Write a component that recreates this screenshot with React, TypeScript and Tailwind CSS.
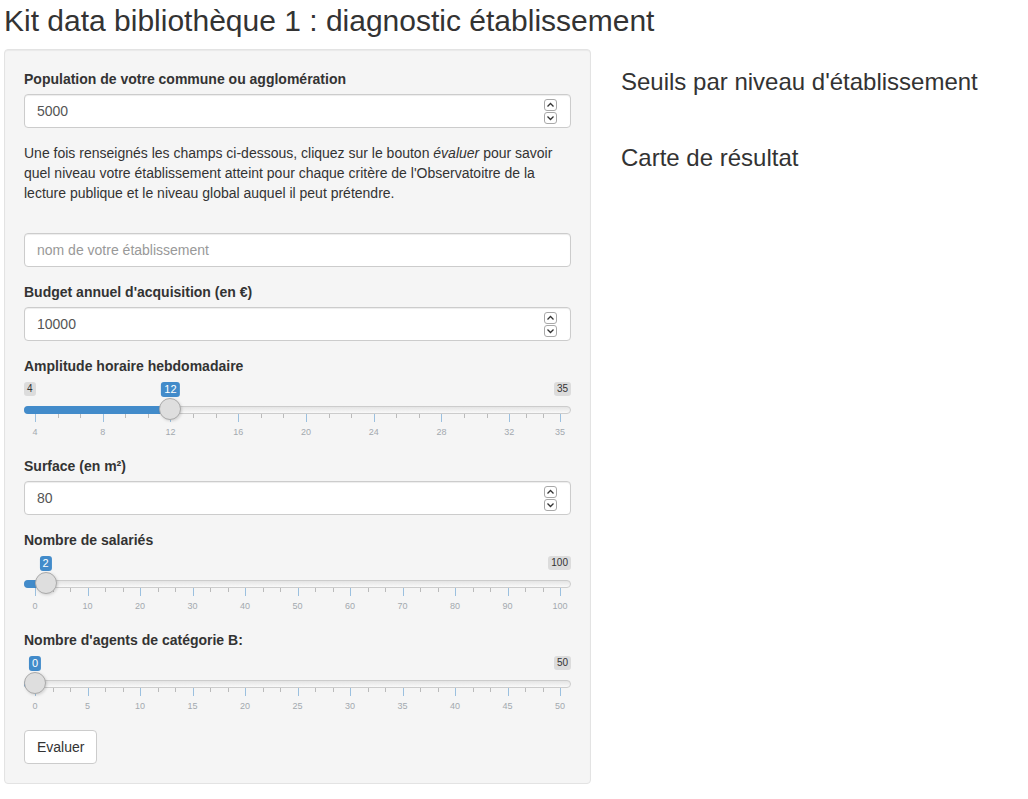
import React from 'react';

const TRACK = 525;
const EDGE = 11;

function Spinner() {
  return (
    <div className="flex flex-col gap-px">
      <span className="flex h-[12px] w-[13px] items-center justify-center rounded-[3px] border border-[#a9a9a9] bg-white">
        <svg width="9" height="6" viewBox="0 0 9 6">
          <path d="M1.5 4.5 L4.5 1.5 L7.5 4.5" fill="none" stroke="#333" strokeWidth="1.3" />
        </svg>
      </span>
      <span className="flex h-[12px] w-[13px] items-center justify-center rounded-[3px] border border-[#a9a9a9] bg-white">
        <svg width="9" height="6" viewBox="0 0 9 6">
          <path d="M1.5 1.5 L4.5 4.5 L7.5 1.5" fill="none" stroke="#333" strokeWidth="1.3" />
        </svg>
      </span>
    </div>
  );
}

function NumberField({ value }: { value: string }) {
  return (
    <div className="flex h-[34px] items-center justify-between rounded-[4px] border border-[#ccc] bg-white pl-3 pr-[13px] text-[14px] text-[#555] shadow-[inset_0_1px_1px_rgba(0,0,0,0.075)]">
      <span>{value}</span>
      <Spinner />
    </div>
  );
}

function Label({ children }: { children: React.ReactNode }) {
  return <label className="mb-[5px] block text-[14px] font-bold leading-[20px]">{children}</label>;
}

interface SliderProps {
  min: number;
  max: number;
  value: number;
  majors: number[];
  showMin?: boolean;
}

function Slider({ min, max, value, majors, showMin }: SliderProps) {
  const pos = (v: number) => EDGE + ((v - min) / (max - min)) * TRACK;
  const p = pos(value);

  // two small ticks between each pair of big ones
  const smalls: number[] = [];
  for (let i = 0; i < majors.length - 1; i++) {
    const a = pos(majors[i]);
    const b = pos(majors[i + 1]);
    smalls.push(a + (b - a) / 3, a + ((b - a) * 2) / 3);
  }

  return (
    <div className="relative h-[60px]">
      {showMin && (
        <span className="absolute left-0 top-px rounded-[3px] bg-black/10 px-[3px] py-px text-[10px] leading-[12px] text-[#333]">
          {min}
        </span>
      )}
      <span className="absolute right-0 top-px rounded-[3px] bg-black/10 px-[3px] py-px text-[10px] leading-[12px] text-[#333]">
        {max}
      </span>
      <span
        className="absolute top-px -translate-x-1/2 rounded-[3px] bg-[#428bca] px-[3px] py-px text-[11px] leading-[13px] text-white"
        style={{ left: p }}
      >
        {value}
      </span>

      <div className="absolute left-0 right-0 top-[25px] h-[8px] rounded-full border border-[#ccc] bg-linear-to-b from-[#e4e4e4] to-[#f9f9f9]" />
      <div className="absolute left-0 top-[25px] h-[8px] rounded-l-full bg-[#428bca]" style={{ width: p }} />

      {smalls.map((x, i) => (
        <span key={'s' + i} className="absolute top-[33px] h-[4px] w-px bg-[#bbb]" style={{ left: x }} />
      ))}
      {majors.map((m) => (
        <React.Fragment key={m}>
          <span className="absolute top-[33px] h-[8px] w-px bg-[#428bca]/50" style={{ left: pos(m) }} />
          <span
            className="absolute top-[45px] -translate-x-1/2 text-[9px] leading-[12px] text-[#a3a9af]"
            style={{ left: pos(m) }}
          >
            {m}
          </span>
        </React.Fragment>
      ))}

      <div
        className="absolute top-[17px] -ml-[11px] h-[22px] w-[22px] rounded-full border border-[#aaa] bg-[#dedede] shadow-[1px_1px_3px_rgba(0,0,0,0.15)]"
        style={{ left: p }}
      />
    </div>
  );
}

const range = (a: number, b: number, s: number) => {
  const out: number[] = [];
  for (let v = a; v <= b; v += s) out.push(v);
  return out;
};

export default function App() {
  return (
    <div className="min-h-screen bg-white px-[4px] font-['Liberation_Sans',Arial,sans-serif] text-[#333]">
      <h2 className="pb-[12px] pt-[4px] text-[30px] leading-[33px]">Kit data bibliothèque 1 : diagnostic établissement</h2>

      <div className="flex items-start">
        <div className="w-[587px] shrink-0 rounded-[4px] border border-[#e3e3e3] bg-[#f5f5f5] p-[19px] shadow-[inset_0_1px_1px_rgba(0,0,0,0.05)]">
          <div className="mb-[15px]">
            <Label>Population de votre commune ou agglomération</Label>
            <NumberField value="5000" />
          </div>

          <p className="mb-[30px] text-[14px] leading-[20px]">
            Une fois renseignés les champs ci-dessous, cliquez sur le bouton <em>évaluer</em> pour savoir quel niveau
            votre établissement atteint pour chaque critère de l'Observatoitre de la lecture publique et le niveau
            global auquel il peut prétendre.
          </p>

          <div className="mb-[15px]">
            <input
              type="text"
              placeholder="nom de votre établissement"
              className="block h-[34px] w-full rounded-[4px] border border-[#ccc] bg-white px-3 text-[14px] text-[#555] shadow-[inset_0_1px_1px_rgba(0,0,0,0.075)] outline-none placeholder:text-[#999]"
            />
          </div>

          <div className="mb-[15px]">
            <Label>Budget annuel d'acquisition (en €)</Label>
            <NumberField value="10000" />
          </div>

          <div className="mb-[15px]">
            <Label>Amplitude horaire hebdomadaire</Label>
            <Slider min={4} max={35} value={12} majors={[4, 8, 12, 16, 20, 24, 28, 32, 35]} showMin />
          </div>

          <div className="mb-[15px]">
            <Label>Surface (en m²)</Label>
            <NumberField value="80" />
          </div>

          <div className="mb-[15px]">
            <Label>Nombre de salariés</Label>
            <Slider min={0} max={100} value={2} majors={range(0, 100, 10)} />
          </div>

          <div className="mb-[15px]">
            <Label>Nombre d'agents de catégorie B:</Label>
            <Slider min={0} max={50} value={0} majors={range(0, 50, 5)} />
          </div>

          <button className="h-[34px] rounded-[4px] border border-[#ccc] bg-white px-3 text-[14px] leading-[20px] text-[#333]">
            Evaluer
          </button>
        </div>

        <div className="pl-[30px]">
          <h3 className="mt-[20px] text-[24px] leading-[26px]">Seuils par niveau d'établissement</h3>
          <h3 className="mt-[50px] text-[24px] leading-[26px]">Carte de résultat</h3>
        </div>
      </div>
    </div>
  );
}
